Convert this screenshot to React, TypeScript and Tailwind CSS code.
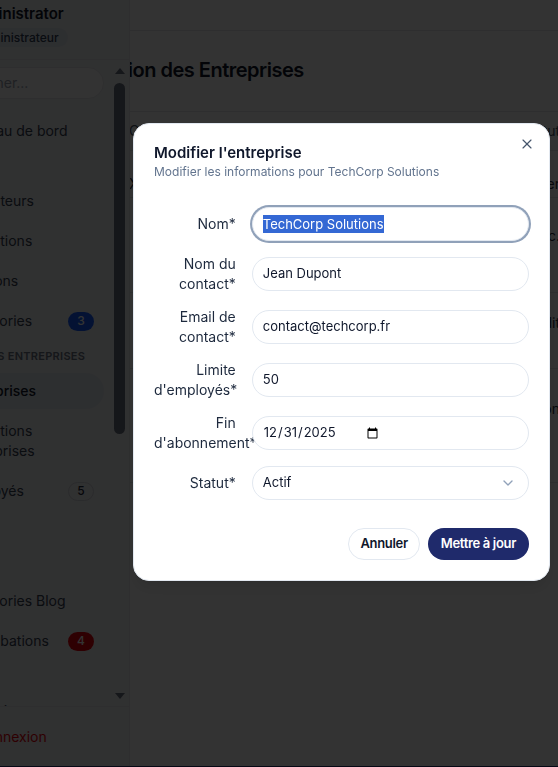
import { ChevronDown, X, LayoutDashboard, Users, Building2, BookOpen, FolderTree, GraduationCap, UserCheck, FileText, Tags, CheckCircle, LogOut, Search, Settings, Layers } from 'lucide-react'

type NavEntry =
  | { kind: 'label'; text: string }
  | { kind: 'item'; text: string; icon: typeof Users; active?: boolean; badge?: string; badgeStyle?: 'blue' | 'red' | 'outline' }

const NAV: NavEntry[] = [
  { kind: 'item', text: 'Tableau de bord', icon: LayoutDashboard },
  { kind: 'label', text: 'GÉNÉRAL' },
  { kind: 'item', text: 'Utilisateurs', icon: Users },
  { kind: 'item', text: 'Institutions', icon: GraduationCap },
  { kind: 'item', text: 'Missions', icon: BookOpen },
  { kind: 'item', text: 'Catégories', icon: FolderTree, badge: '3', badgeStyle: 'blue' },
  { kind: 'label', text: 'GESTION DES ENTREPRISES' },
  { kind: 'item', text: 'Entreprises', icon: Building2, active: true },
  { kind: 'item', text: 'Institutions entreprises', icon: Layers },
  { kind: 'item', text: 'Employés', icon: UserCheck, badge: '5', badgeStyle: 'outline' },
  { kind: 'label', text: 'BLOG' },
  { kind: 'item', text: 'Blog', icon: FileText },
  { kind: 'item', text: 'Catégories Blog', icon: Tags },
  { kind: 'item', text: 'Approbations', icon: CheckCircle, badge: '4', badgeStyle: 'red' },
  { kind: 'label', text: 'SYSTÈME' },
  { kind: 'item', text: 'Paramètres', icon: Settings },
]

const BADGE_STYLES = {
  blue: 'bg-blue-600 text-white',
  red: 'bg-red-600 text-white',
  outline: 'border border-gray-300 text-gray-800',
}

// row heights and text offsets for the table behind the overlay
const ROWS = [
  { cls: 'h-[47px] pt-[23px]', first: 'Xeria Group', last: 'Gérer' },
  { cls: 'h-[95px] pt-[28px]', first: '', last: 'TechCorp Inc.' },
  { cls: 'h-[76px] pt-[20px]', first: '', last: 'Crédit' },
  { cls: 'h-[114px] pt-[30px]', first: '', last: 'Expiration' },
]

function Sidebar() {
  return (
    <aside className="w-[130px] shrink-0 overflow-hidden border-r border-gray-200 bg-[#f1f2f4]">
      <div className="ml-[-111px] flex h-[766px] w-[240px] flex-col">
        <div className="flex h-[60px] shrink-0 items-start gap-3 border-b border-gray-200 px-6 pt-1">
          <div className="mt-1 h-10 w-10 shrink-0 rounded-full bg-[#1f2a6b]" />
          <div className="flex flex-col items-start">
            <span className="text-[15px] font-semibold leading-5 text-gray-900">Administrator</span>
            <span className="mt-1 rounded-full bg-slate-200 px-[9px] py-[1px] text-xs font-medium leading-[17px] text-slate-700">Administrateur</span>
          </div>
        </div>
        <div className="flex min-h-0 flex-1">
          <div className="min-h-0 w-[225px] overflow-hidden pr-[10px] pl-[27px] pt-[7px]">
            <div className="flex h-8 items-center gap-1 rounded-full border border-gray-200 bg-white px-1">
              <Search className="h-4 w-4 text-gray-400" />
              <span className="text-sm text-gray-400">Rechercher...</span>
            </div>
            <nav className="mt-[14px] flex flex-col gap-1">
              {NAV.map((entry) =>
                entry.kind === 'label' ? (
                  <div key={entry.text} className="flex h-[26px] items-center px-3 text-[11px] font-semibold tracking-wide text-gray-500">
                    {entry.text}
                  </div>
                ) : (
                  <div
                    key={entry.text}
                    className={`flex min-h-9 items-center gap-3 rounded-full py-2 pl-3 pr-[10px] ${entry.active ? 'bg-slate-200 font-medium text-gray-900' : 'text-gray-700'}`}
                  >
                    <entry.icon className="h-5 w-5 shrink-0" />
                    <span className="flex-1 text-sm leading-5">{entry.text}</span>
                    {entry.badge && entry.badgeStyle && (
                      <span className={`flex h-[19px] w-[26px] items-center justify-center rounded-full text-xs font-medium ${BADGE_STYLES[entry.badgeStyle]}`}>
                        {entry.badge}
                      </span>
                    )}
                  </div>
                ),
              )}
            </nav>
          </div>
          {/* scrollbar */}
          <div className="flex w-[11px] flex-col items-center pt-[8px] pb-[7px]">
            <div className="h-0 w-0 border-x-[5px] border-b-[6px] border-x-transparent border-b-gray-500" />
            <div className="mt-[9px] h-[351px] w-[11px] rounded-full bg-gray-500" />
            <div className="flex-1" />
            <div className="h-0 w-0 border-x-[5px] border-t-[6px] border-x-transparent border-t-gray-500" />
          </div>
        </div>
        <div className="flex h-[60px] shrink-0 items-center border-t border-gray-200 pl-[27px]">
          <div className="flex items-center gap-3 px-3 text-red-600">
            <LogOut className="h-5 w-5" />
            <span className="text-sm">Déconnexion</span>
          </div>
        </div>
      </div>
    </aside>
  )
}

function Main() {
  return (
    <main className="min-w-0 flex-1 overflow-hidden bg-white">
      <div className="ml-[-64px] w-[518px]">
        <div className="h-[31px] border-b border-gray-200" />
        <h1 className="ml-[-5px] mt-[25px] px-6 text-xl font-semibold leading-7 tracking-tight text-gray-900">Gestion des Entreprises</h1>
        <div className="mt-[27px] border-t border-gray-200">
          <div className="flex h-[39px] items-center justify-between border-b border-gray-200 px-6 text-sm text-gray-600">
            <span className="pl-[39px]">Chef</span>
            <span>Statut</span>
          </div>
          {ROWS.map((row) => (
            <div key={row.last} className={`flex ${row.cls} items-start justify-between border-b border-gray-200 px-6 text-sm leading-5 text-gray-800`}>
              <span className="pl-[39px]">{row.first}</span>
              <span>{row.last}</span>
            </div>
          ))}
        </div>
      </div>
    </main>
  )
}

function Field({ label, children }: { label: string; children: React.ReactNode }) {
  return (
    <div className="grid grid-cols-4 items-center gap-x-4">
      <label className="text-right text-sm leading-5 text-slate-800">{label}</label>
      <div className="col-span-3">{children}</div>
    </div>
  )
}

const INPUT = 'flex h-[34px] w-full items-center rounded-full border border-slate-200 bg-white px-[10px] text-[13px] text-slate-900'

function EditDialog() {
  return (
    <div className="fixed left-[133px] top-[123px] w-[417px] rounded-2xl border border-slate-200 bg-white p-5 shadow-lg">
      <button className="absolute right-[14px] top-[12px] text-slate-600">
        <X className="h-4 w-4" strokeWidth={1.75} />
      </button>
      <h2 className="text-[15px] font-semibold leading-[18px] text-slate-900">Modifier l'entreprise</h2>
      <p className="text-xs leading-5 text-slate-500">Modifier les informations pour TechCorp Solutions</p>
      <div className="mt-[25px] grid gap-y-[13px]">
        <Field label="Nom*">
          <div className={`${INPUT} ring-2 ring-slate-400`}>
            <span className="bg-[#3468d4] leading-[18px] text-white">TechCorp Solutions</span>
          </div>
        </Field>
        <Field label="Nom du contact*">
          <div className={INPUT}>Jean Dupont</div>
        </Field>
        <Field label="Email de contact*">
          <div className={INPUT}>contact@techcorp.fr</div>
        </Field>
        <Field label="Limite d'employés*">
          <div className={INPUT}>50</div>
        </Field>
        <Field label="Fin d'abonnement*">
          <input type="date" defaultValue="2025-12-31" className={INPUT} />
        </Field>
        <Field label="Statut*">
          <div className={`${INPUT} justify-between pr-3`}>
            <span>Actif</span>
            <ChevronDown className="h-4 w-4 text-slate-400" />
          </div>
        </Field>
      </div>
      <div className="mt-7 flex justify-end gap-2">
        <button className="h-8 rounded-full border border-slate-200 bg-white px-[11px] text-[13px] font-semibold tracking-tight text-slate-900">Annuler</button>
        <button className="h-8 rounded-full bg-[#1f2a6b] px-[13px] text-[13px] font-semibold tracking-tight text-white">Mettre à jour</button>
      </div>
    </div>
  )
}

export default function App() {
  return (
    <div className="relative h-[767px] w-full overflow-hidden font-['Inter',sans-serif]">
      <div className="flex h-[766px]">
        <Sidebar />
        <Main />
      </div>
      <div className="h-px bg-[#1f2a6b]" />
      <div className="fixed inset-0 bg-black/80" />
      <EditDialog />
    </div>
  )
}
